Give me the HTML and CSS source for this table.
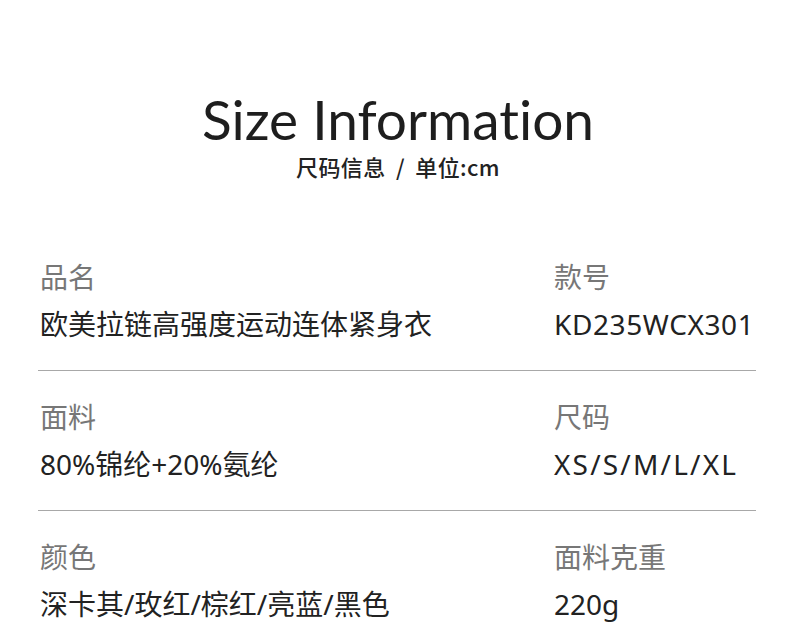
FILE: index.html
```html
<!DOCTYPE html>
<html lang="zh-CN">
<head>
<meta charset="utf-8">
<title>Size Information</title>
<link rel="stylesheet" href="styles.css">
</head>
<body>
<main class="page">
  <header class="head">
    <h1 class="title">Size Information</h1>
    <p class="subtitle">尺码信息 / 单位:cm</p>
  </header>
  <section class="specs">
    <div class="row">
      <div class="cell">
        <div class="label">品名</div>
        <div class="value">欧美拉链高强度运动连体紧身衣</div>
      </div>
      <div class="cell">
        <div class="label">款号</div>
        <div class="value value-code">KD235WCX301</div>
      </div>
    </div>
    <div class="row">
      <div class="cell">
        <div class="label">面料</div>
        <div class="value">80%锦纶+20%氨纶</div>
      </div>
      <div class="cell">
        <div class="label">尺码</div>
        <div class="value value-sizes">XS/S/M/L/XL</div>
      </div>
    </div>
    <div class="row last">
      <div class="cell">
        <div class="label">颜色</div>
        <div class="value">深卡其/玫红/棕红/亮蓝/黑色</div>
      </div>
      <div class="cell">
        <div class="label">面料克重</div>
        <div class="value">220g</div>
      </div>
    </div>
  </section>
</main>
</body>
</html>
```

FILE: styles.css
```css
html, body {
  margin: 0;
  padding: 0;
  background: #ffffff;
}

body {
  font-family: "Noto Sans", "Noto Sans CJK SC", sans-serif;
  color: #222222;
}

.page {
  width: 790px;
  height: 635px;
  overflow: hidden;
}

.head {
  text-align: center;
  padding-top: 88px;
}

.title {
  margin: 0;
  font-family: "Lato", "Noto Sans", sans-serif;
  font-weight: 400;
  font-size: 55px;
  line-height: 63px;
  color: #1e1e1e;
  font-variant-ligatures: none;
  padding-left: 6px;
}

.subtitle {
  margin: 0;
  padding-left: 6px;
  font-family: "Noto Sans CJK SC", sans-serif;
  font-size: 22px;
  line-height: 30px;
  font-weight: 500;
  color: #222222;
  word-spacing: 5px;
  letter-spacing: 0.4px;
}

.specs {
  margin: 50px 34px 0 38px;
}

.row {
  display: grid;
  grid-template-columns: 514px 1fr;
  padding: 26px 0 26px 2px;
  border-bottom: 1px solid #a8a8a8;
}

.row.last {
  border-bottom: none;
}

.cell {
  display: flex;
  flex-direction: column;
  gap: 7px;
}

.label {
  font-size: 28px;
  line-height: 40px;
  color: #777777;
}

.value {
  font-size: 28px;
  line-height: 40px;
  color: #222222;
}

.value-code {
  letter-spacing: 0.6px;
}

.value-sizes {
  letter-spacing: 2.2px;
}
```
